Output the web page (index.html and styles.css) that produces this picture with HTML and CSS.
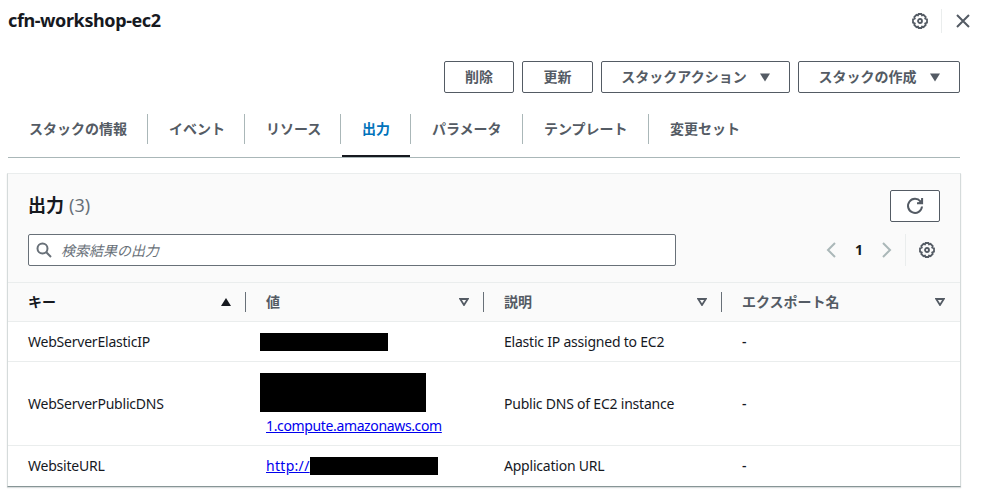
FILE: index.html
```html
<!DOCTYPE html>
<html lang="ja">
<head>
<meta charset="utf-8">
<title>cfn-workshop-ec2</title>
<link rel="stylesheet" href="styles.css">
</head>
<body>
<svg class="defs" width="0" height="0" aria-hidden="true">
  <symbol id="gear" viewBox="0 0 16 16">
    <path d="M6.600 1h2.800l.6 1.300 1.500-.5 2.200 2.200-.5 1.500 1.800.9v3.200l-1.800.9.5 1.500-2.200 2.200-1.500-.5-.6 1.300H6.600L6 13.700l-1.500.5L2.300 12l.5-1.500L1 9.600V6.400l1.800-.9L2.300 4l2.200-2.200 1.500.5z"/>
    <circle cx="8" cy="8" r="2"/>
  </symbol>
</svg>
<header class="top">
  <h1 class="title">cfn-workshop-ec2</h1>
  <div class="tools">
    <svg class="icon gear" width="16" height="16"><use href="#gear"/></svg>
    <span class="rule"></span>
    <svg class="icon" width="16" height="16" viewBox="0 0 16 16"><path d="M2 2l12 12M14 2L2 14"/></svg>
  </div>
</header>
<div class="actions">
  <button class="btn b-delete">削除</button>
  <button class="btn b-update">更新</button>
  <button class="btn b-action">スタックアクション<svg class="caret" width="10" height="9"><path d="M0 .5h10L5 8.500z"/></svg></button>
  <button class="btn b-create">スタックの作成<svg class="caret" width="10" height="9"><path d="M0 .5h10L5 8.500z"/></svg></button>
</div>
<nav class="tabs">
  <a class="tab w1">スタックの情報</a>
  <a class="tab w2">イベント</a>
  <a class="tab w3">リソース</a>
  <a class="tab w4 active">出力</a>
  <a class="tab w5">パラメータ</a>
  <a class="tab w6">テンプレート</a>
  <a class="tab w7">変更セット</a>
</nav>
<section class="panel">
  <div class="panel-head">
    <div class="line">
      <h2 class="heading">出力 <span class="count">(3)</span></h2>
      <button class="btn refresh"><svg class="icon" width="18" height="18" viewBox="0 0 18 18"><path d="M16 9.500A7 7 0 1 1 14.500 4.500M16.100 1v5.200H11"/><path class="solid" d="M16 2v4h-4z"/></svg></button>
    </div>
    <div class="line second">
      <div class="search">
        <svg class="icon" width="16" height="16" viewBox="0 0 16 16"><circle cx="6.500" cy="6.500" r="5"/><path d="M10.300 10.300L15 15"/></svg>
        <span class="placeholder">検索結果の出力</span>
      </div>
      <div class="pager">
        <svg class="icon pale" width="10" height="16"><path d="M9 1L2 8l7 7"/></svg>
        <b class="page">1</b>
        <svg class="icon pale" width="10" height="16"><path d="M1 1l7 7-7 7"/></svg>
        <span class="rule tall"></span>
        <svg class="icon gear" width="16" height="16"><use href="#gear"/></svg>
      </div>
    </div>
  </div>
  <div class="row thead">
    <div class="cell sorted">キー<svg class="sort full" width="10" height="8"><path d="M5 0l5 8H0z"/></svg></div>
    <div class="cell">値<svg class="sort" width="10" height="8"><path d="M1.200 1h7.600L5 7z"/></svg></div>
    <div class="cell">説明<svg class="sort" width="10" height="8"><path d="M1.200 1h7.600L5 7z"/></svg></div>
    <div class="cell">エクスポート名<svg class="sort" width="10" height="8"><path d="M1.200 1h7.600L5 7z"/></svg></div>
  </div>
  <div class="row">
    <div class="cell">WebServerElasticIP</div>
    <div class="cell"><span class="mask m1"></span></div>
    <div class="cell">Elastic IP assigned to EC2</div>
    <div class="cell dash">-</div>
  </div>
  <div class="row large">
    <div class="cell">WebServerPublicDNS</div>
    <div class="cell stack"><span class="mask m2"></span><a class="link" href="#">1.compute.amazonaws.com</a></div>
    <div class="cell">Public DNS of EC2 instance</div>
    <div class="cell dash">-</div>
  </div>
  <div class="row last">
    <div class="cell">WebsiteURL</div>
    <div class="cell"><a class="link http" href="#">http://</a><span class="mask m3"></span></div>
    <div class="cell">Application URL</div>
    <div class="cell dash">-</div>
  </div>
</section>
</body>
</html>
```
FILE: styles.css
```css
* { box-sizing: border-box; }
body {
  margin: 0;
  height: 496px;
  overflow: hidden;
  background: #fff;
  color: #16191f;
  font: 14px/22px "Noto Sans", "Noto Sans CJK JP", sans-serif;
}
.defs { display: block; height: 0; }
.icon { display: block; flex: none; fill: none; stroke: #545b64; stroke-width: 2; }
.icon.gear { stroke-width: 1.8; }
.icon .solid { fill: #545b64; stroke: none; }
.icon.pale { stroke: #aab7b8; }
.top { display: flex; justify-content: space-between; padding: 9px 11px 0 8px; height: 61px; }
.title { margin: 0; font-size: 18px; line-height: 22px; letter-spacing: -.4px; }
.tools { display: flex; align-items: center; height: 24px; }
.rule { width: 1px; height: 24px; margin: 0 13px; background: #eaeded; }
.actions { display: flex; justify-content: flex-end; gap: 8px; height: 53px; padding-right: 22px; }
.btn {
  display: flex; align-items: center; justify-content: center;
  height: 32px; padding: 0 0 2px; border: 1px solid #545b64; border-radius: 2px;
  background: #fff; color: #545b64;
  font: bold 14px/22px "Noto Sans CJK JP", sans-serif;
}
.b-delete { width: 70px; }
.b-update { width: 71px; }
.b-action { width: 189px; }
.b-create { width: 162px; }
.caret { margin: 2px 0 0 13px; fill: #545b64; }
.tabs { display: flex; margin: 0 22px 0 8px; height: 44px; border-bottom: 1px solid #aab7b8; }
.tab {
  position: relative; height: 30px; padding-left: 21px; border-right: 1px solid #aab7b8;
  color: #545b64; font: bold 14px/28px "Noto Sans CJK JP", sans-serif; white-space: nowrap;
}
.w1 { width: 140px; }
.w2 { width: 97px; }
.w3 { width: 96px; }
.w4 { width: 70px; }
.w5 { width: 112px; }
.w6 { width: 126px; }
.w7 { border: 0; }
.tab.active { color: #0073bb; }
.tab.active::after { content: ""; position: absolute; left: 1px; right: 0; top: 41px; height: 2px; background: #16191f; }
.panel {
  width: 954px; margin: 15px 0 0 7px; border: 1px solid #d5dbdb;
  border-top-color: #eaeded; border-bottom-color: #879596; box-shadow: 0 1px 1px rgba(0, 28, 36, .15);
}
.panel-head { height: 109px; padding: 16px 20px 0; background: #fafafa; border-bottom: 1px solid #eaeded; }
.line { display: flex; justify-content: space-between; }
.heading { margin: 0; font: bold 18px/28px "Noto Sans CJK JP", sans-serif; }
.count { color: #687078; font: 18px/28px "Noto Sans", sans-serif; margin-left: 1px; }
.refresh { width: 50px; padding: 0; }
.second { margin-top: 12px; }
.search {
  display: flex; align-items: center; width: 648px; height: 32px; padding-left: 7px;
  border: 1px solid #687078; border-radius: 2px; background: #fff;
}
.search .icon { stroke: #687078; }
.placeholder { margin-left: 9px; color: #687078; font: italic 14px/22px "Noto Sans CJK JP", sans-serif; }
.pager { display: flex; align-items: center; height: 32px; padding-right: 5px; }
.page { width: 46px; text-align: center; font-size: 14px; }
.rule.tall { height: 32px; margin: 0 13px; }
.row { display: grid; grid-template-columns: repeat(4, 238px); height: 40px; border-bottom: 1px solid #eaeded; }
.row.large { height: 84px; }
.row.last { border: 0; }
.cell { display: flex; align-items: center; padding-left: 20px; white-space: nowrap; letter-spacing: -.22px; }
.dash { font-weight: 500; }
.thead { height: 39px; background: #fafafa; }
.thead .cell {
  position: relative; justify-content: space-between; padding: 0 15px 2px 20px; letter-spacing: 0;
  color: #545b64; font: bold 14px/22px "Noto Sans CJK JP", sans-serif;
}
.thead .sorted { color: #16191f; }
.thead .cell:not(:last-child)::after { content: ""; position: absolute; right: 0; top: 9px; width: 1px; height: 20px; background: #687078; }
.sort { margin-top: 2px; fill: none; stroke: #545b64; stroke-width: 1.8; }
.sort.full { fill: #16191f; stroke: none; }
.link { color: #0000ee; text-decoration: underline; letter-spacing: -.36px; }
.mask { display: block; background: #000; }
.m1 { width: 128px; height: 18px; margin-left: -6px; }
.m2 { width: 166px; height: 39px; margin-left: -6px; }
.m3 { width: 128px; height: 18px; }
.stack { flex-direction: column; align-items: flex-start; justify-content: flex-start; padding-top: 11px; }
.stack .link { margin-top: 3px; }
.http { width: 44px; letter-spacing: .3px; }
```
